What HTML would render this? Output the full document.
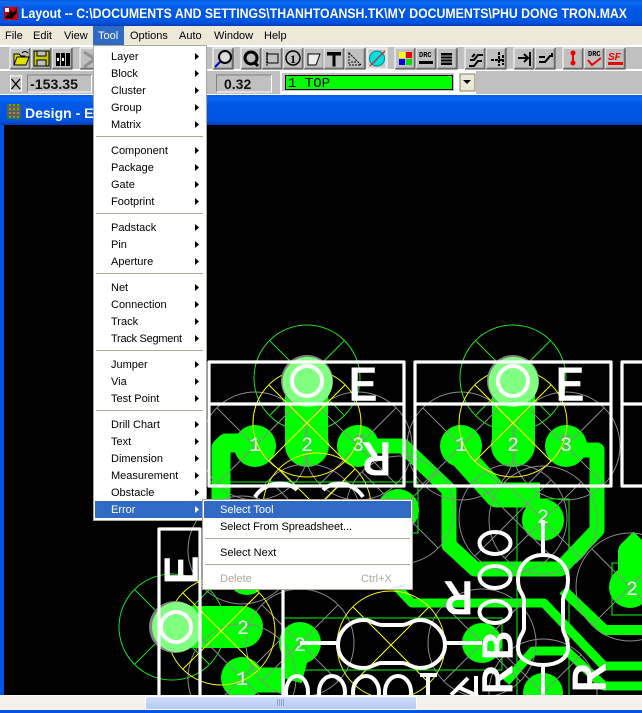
<!DOCTYPE html>
<html><head><meta charset="utf-8"><style>
html,body{margin:0;padding:0;background:#000;width:642px;height:713px;overflow:hidden}
svg{display:block}
.m{font:11px "Liberation Sans",sans-serif;fill:#000}
.ct{font:48px "Liberation Mono",monospace;fill:#fff;stroke:#fff;stroke-width:1.6}
.n{font:20px "Liberation Mono",monospace;fill:#e8ffe8}
</style></head><body>
<svg width="642" height="713" viewBox="0 0 642 713" xmlns="http://www.w3.org/2000/svg">
<defs>
<linearGradient id="tb" x1="0" y1="0" x2="0" y2="1"><stop offset="0" stop-color="#0a5ae0"/><stop offset=".12" stop-color="#0a6af5"/><stop offset=".3" stop-color="#0058e6"/><stop offset=".85" stop-color="#0055e0"/><stop offset="1" stop-color="#003cb8"/></linearGradient>
<linearGradient id="th" x1="0" y1="0" x2="0" y2="1"><stop offset="0" stop-color="#d3e0fc"/><stop offset="1" stop-color="#b4c8f6"/></linearGradient>
<g id="btn"><rect width="20" height="21" fill="#c0c0c0"/><path d="M0 21V0H20" fill="none" stroke="#fff"/><path d="M20 0V21H0" fill="none" stroke="#444"/><path d="M19 1V20H1" fill="none" stroke="#909090"/></g>
<g id="th1" fill="none" stroke="#8c8c8c"><circle r="54"/><path d="M-38-38L38 38M-38 38L38-38"/></g>
<g id="grn" fill="none" stroke="#1ee01e"><circle r="53"/><path d="M-37-37L37 37M-37 37L37-37"/></g>
<g id="yel" fill="none" stroke="#ffff00"><circle r="54"/><path d="M-38-38L38 38M-38 38L38-38"/></g>
</defs>

<rect width="642" height="713" fill="#0055e3"/>
<rect width="642" height="26" fill="url(#tb)"/>
<rect x="4" y="7" width="14" height="13" fill="#c00"/><path d="M5 18L11 10L13 13L17 8V12L12 19Z" fill="#000"/><rect x="5" y="8" width="4" height="4" fill="#fff"/>
<text x="21" y="18" font-family="Liberation Sans,sans-serif" font-weight="bold" font-size="14" fill="#fff" textLength="606" lengthAdjust="spacingAndGlyphs">Layout -- C:\DOCUMENTS AND SETTINGS\THANHTOANSH.TK\MY DOCUMENTS\PHU DONG TRON.MAX</text>

<rect y="26" width="642" height="19" fill="#ece9d8"/>
<rect x="93" y="26" width="31" height="19" fill="#316ac5"/>
<g class="m"><text x="5" y="39" class="m">File</text><text x="33" y="39" class="m">Edit</text><text x="64" y="39" class="m">View</text><text x="98" y="39" class="m" style="fill:#fff">Tool</text><text x="130" y="39" class="m">Options</text><text x="179" y="39" class="m">Auto</text><text x="214" y="39" class="m">Window</text><text x="264" y="39" class="m">Help</text></g>

<rect y="45" width="642" height="2" fill="#fff"/>
<rect y="47" width="642" height="23" fill="#c0c0c0"/>
<rect y="69" width="642" height="2" fill="#fff"/>
<rect y="71" width="642" height="23" fill="#c0c0c0"/>
<rect y="94" width="642" height="1" fill="#fff"/>

<g>
<use href="#btn" x="10" y="48"/><use href="#btn" x="31" y="48"/><use href="#btn" x="52" y="48"/><use href="#btn" x="80" y="48"/>
<use href="#btn" x="213" y="48"/><use href="#btn" x="241" y="48"/><use href="#btn" x="262" y="48"/><use href="#btn" x="283" y="48"/><use href="#btn" x="304" y="48"/><use href="#btn" x="324" y="48"/><use href="#btn" x="345" y="48"/><use href="#btn" x="395" y="48"/><use href="#btn" x="416" y="48"/><use href="#btn" x="437" y="48"/><use href="#btn" x="465" y="48"/><use href="#btn" x="486" y="48"/><use href="#btn" x="514" y="48"/><use href="#btn" x="535" y="48"/><use href="#btn" x="563" y="48"/><use href="#btn" x="584" y="48"/><use href="#btn" x="605" y="48"/>
<rect x="367" y="48" width="20" height="21" fill="#d8d8d8" stroke="#fff"/>
<path d="M14 65L17 57H29L26 65ZM14 65V54H19L21 56H25V57" fill="#e0e000" stroke="#000"/><path d="M22 53Q25 50 28 53" fill="none" stroke="#000"/>
<rect x="34" y="51" width="15" height="15" fill="#c8c800" stroke="#000"/><rect x="37" y="51" width="9" height="5" fill="#c0c0c0" stroke="#000"/><rect x="37" y="60" width="9" height="6" fill="#c0c0c0" stroke="#000"/>
<path d="M56 53h4v13h-4zM61 53h4v13h-4zM66 53h4v13h-4z" fill="#000"/><rect x="57" y="58" width="2" height="3" fill="#fff"/><rect x="62" y="58" width="2" height="3" fill="#fff"/>
<path d="M84 52L95 59L84 67" fill="none" stroke="#909090" stroke-width="3"/>
<circle cx="225" cy="57" r="6" fill="#ddd" stroke="#000" stroke-width="2"/><path d="M220 62L215 67" stroke="#00c" stroke-width="2"/>
<circle cx="251" cy="58" r="6" fill="none" stroke="#000" stroke-width="3"/><path d="M254 62L258 66" stroke="#000" stroke-width="3"/>
<rect x="267" y="54" width="11" height="9" fill="none" stroke="#000"/><path d="M266 53h13M266 56h13M266 59h13M266 62h13M266 65h13" stroke="#000" fill="none" stroke-dasharray="2 11"/>
<circle cx="293" cy="58" r="7" fill="none" stroke="#000" stroke-width="1.5"/><text x="290" y="63" font-family="Liberation Serif,serif" font-size="12" font-weight="bold" fill="#000">1</text>
<path d="M308 54H320L316 65H308Z" fill="#eee" stroke="#000"/>
<path d="M327 52h14v3.500h-5.500v11h-3v-11h-5.500z" fill="#000"/>
<path d="M349 53V65H361ZM351 62L357 62" fill="none" stroke="#000" stroke-dasharray="2 1"/>
<rect x="369" y="50" width="16" height="17" fill="#c8c8c8"/><circle cx="377" cy="58.500" r="7.500" fill="#00e0e0" stroke="#088" /><path d="M370 66L385 51" stroke="#e00" stroke-width="1"/>
<rect x="399" y="52" width="6" height="6" fill="#ff0"/><rect x="406" y="52" width="6" height="6" fill="#e00"/><rect x="399" y="59" width="6" height="6" fill="#00d"/><rect x="406" y="59" width="6" height="6" fill="#0d0"/>
<text x="419" y="57" font-family="Liberation Mono,monospace" font-weight="bold" font-size="7" fill="#000">DRC</text><rect x="419" y="61" width="14" height="3" fill="#000"/>
<path d="M441 53h11v12h-11z" fill="#000"/><path d="M441 56h11M441 59h11M441 62h11" stroke="#c0c0c0"/>
<path d="M469 66h5l4-5h4M470 60h4l4-5h5M475 54l-3 3" fill="none" stroke="#000" stroke-width="2"/>
<path d="M499 52v14M491 60h12M503 55v10" fill="none" stroke="#000" stroke-width="2" stroke-dasharray="3 1"/>
<path d="M518 58h10M524 54l4 4-4 4M530 52v14" fill="none" stroke="#000" stroke-width="2"/>
<path d="M539 62h6l5-6h3M539 57h6M552 53v4" fill="none" stroke="#000" stroke-width="2"/>
<circle cx="573" cy="53" r="2.500" fill="#e00"/><circle cx="573" cy="63" r="2.500" fill="#e00"/><rect x="572" y="53" width="2" height="10" fill="#e00"/>
<text x="588" y="56" font-family="Liberation Mono,monospace" font-weight="bold" font-size="7" fill="#000">DRC</text><path d="M588 60l4 5 9-7" fill="none" stroke="#e00" stroke-width="2"/>
<text x="608" y="60" font-family="Liberation Sans,sans-serif" font-style="italic" font-weight="bold" font-size="10" fill="#e00">SF</text><rect x="608" y="62" width="15" height="3" fill="#e00"/>
</g>

<rect x="10.500" y="76" width="11" height="15" fill="#c0c0c0" stroke="#fff"/>
<path d="M11.500 79L20 89M20 79L11.500 89" stroke="#000" stroke-width="1.300"/>
<rect x="27.500" y="75" width="64" height="17" fill="#c0c0c0" stroke="#808080"/>
<path d="M27.500 92H91.500V75" fill="none" stroke="#fff"/>
<text x="30" y="89" font-family="Liberation Sans,sans-serif" font-weight="bold" font-size="14" fill="#111" textLength="48" lengthAdjust="spacingAndGlyphs">-153.35</text>
<rect x="216.500" y="75" width="55" height="17" fill="#c0c0c0" stroke="#808080"/>
<path d="M216.500 92H271.500V75" fill="none" stroke="#fff"/>
<text x="224" y="89" font-family="Liberation Sans,sans-serif" font-weight="bold" font-size="14" fill="#111">0.32</text>
<rect x="280" y="71" width="196" height="23" fill="#fff"/>
<rect x="282" y="73" width="172" height="18" fill="#c0c0c0"/>
<rect x="285.500" y="75.500" width="167" height="14" fill="#00ff00" stroke="#000"/>
<text x="288" y="87" font-family="Liberation Mono,monospace" font-size="14" fill="#000" textLength="42">1 TOP</text>
<rect x="460" y="74" width="15" height="17" fill="#ece9d8" stroke="#808060"/>
<path d="M463 80h8l-4 4z" fill="#000"/>

<!-- MDI title -->
<rect y="95" width="642" height="30" fill="url(#tb)"/>
<rect x="7" y="104" width="14" height="15" fill="#208020"/><path d="M7 107h14M7 110h14M7 113h14M7 116h14" stroke="#d020d0"/><path d="M10 104v15M14 104v15M18 104v15" stroke="#e0c000" stroke-dasharray="2 2"/>
<text x="25" y="118" font-family="Liberation Sans,sans-serif" font-weight="bold" font-size="14" fill="#fff">Design - Er</text>

<!-- Canvas -->
<rect x="4" y="125" width="638" height="572" fill="#000"/>
<svg x="4" y="125" width="638" height="570" viewBox="4 125 638 570">
<g fill="none" stroke="#00ff00" stroke-linejoin="round">
<path d="M255 443H226L221 448V500" stroke-width="19"/>
<path d="M358 446H403L449 490V545L475 569H560L597 530V450H570" stroke-width="15"/>
<path d="M461 446V455L497 495H540" stroke-width="25"/>
<path d="M395 585L412 603H544L604 666H642" stroke-width="9"/>
<path d="M563 590L605 630H642" stroke-width="10"/>
<path d="M506 682L533 651H567L604 686H642" stroke-width="9"/>
<path d="M630 590V552L642 540" stroke-width="24"/>
<path d="M242 680H285" stroke-width="25"/>
<path d="M300 643L290 680" stroke-width="24"/>
</g>
<g fill="#00ff00">
<circle cx="255" cy="446" r="21"/><circle cx="358" cy="446" r="21"/><circle cx="461" cy="446" r="21"/><circle cx="566" cy="446" r="21"/>
<rect x="285" y="381" width="43" height="64"/><circle cx="307" cy="445" r="22"/>
<rect x="492" y="381" width="43" height="64"/><circle cx="513" cy="445" r="22"/>
<rect x="176" y="606" width="66" height="42"/><circle cx="242" cy="627" r="21"/>
<circle cx="242" cy="678" r="21"/><circle cx="300" cy="643" r="21"/>
<circle cx="543" cy="520" r="21"/><circle cx="482" cy="643" r="20"/><circle cx="630" cy="587" r="21"/><circle cx="543" cy="693" r="20"/><circle cx="398" cy="510" r="21"/><circle cx="247" cy="575" r="20"/>
</g>

<use href="#th1" x="255" y="446"/><use href="#th1" x="358" y="446"/><use href="#th1" x="461" y="446"/><use href="#th1" x="566" y="446"/><use href="#th1" x="307" y="518"/><use href="#th1" x="513" y="518"/><use href="#th1" x="400" y="510"/><use href="#th1" x="300" y="643"/><use href="#th1" x="242" y="678"/><use href="#th1" x="630" y="587"/><use href="#th1" x="482" y="643"/><use href="#th1" x="543" y="520"/><use href="#th1" x="543" y="693"/><use href="#th1" x="242" y="550"/>
<use href="#grn" x="307" y="378"/><use href="#grn" x="513" y="378"/><use href="#grn" x="172" y="627"/>
<use href="#yel" x="307" y="423"/><use href="#yel" x="513" y="423"/><use href="#yel" x="221" y="631"/><use href="#yel" x="391" y="645"/><use href="#yel" x="317" y="507"/>
<path d="M283 618H502V670H283M210 482H418V533H400M517 499H569V695M517 499V695" stroke="#00ff00" fill="none"/>
<rect x="612" y="563" width="40" height="52" fill="none" stroke="#00ff00"/>

<circle cx="307" cy="381" r="26" fill="#808080"/><circle cx="513" cy="381" r="26" fill="#808080"/><circle cx="175" cy="627" r="26" fill="#808080"/>
<circle cx="307.500" cy="382" r="25" fill="#80ff80"/><circle cx="513.500" cy="382" r="25" fill="#80ff80"/><circle cx="177" cy="627" r="25" fill="#80ff80"/>

<g fill="none" stroke="#fff" stroke-width="3.200" stroke-linejoin="round">
<rect x="209" y="362" width="195" height="124"/><path d="M209 404H404"/>
<rect x="415" y="362" width="196" height="124"/><path d="M415 404H611"/>
<path d="M642 362H622V486H642M622 404H642"/>
<path d="M200 695V529H159V695M283 695V590"/>
</g>
<g fill="none" stroke="#fff" stroke-width="4" stroke-linejoin="round">
<circle cx="307" cy="381" r="15"/><circle cx="513" cy="381" r="15"/><circle cx="176" cy="627" r="15"/>
<path d="M364 620C349 620 338 632 338 645C338 658 349 668 364 668C372 668 375 663 382 663H402C408 663 412 668 420 668C433 668 445 658 445 645C445 632 433 620 420 620C412 620 408 625 402 625H382C375 625 372 620 364 620Z"/>
<path d="M543 555C528 555 518 566 518 580C518 592 524 594 524 600V628C524 634 518 636 518 648C518 658 528 665 543 665C558 665 568 658 568 648C568 636 563 634 563 628V600C563 594 568 592 568 580C568 566 558 555 543 555Z"/>
<path d="M300 643H338M445 643H482M543 520V555M543 665V695M255 497C262 484 285 478 297 490M323 490C335 478 355 484 363 497"/>
<ellipse cx="495" cy="543" rx="15.500" ry="11"/><ellipse cx="495" cy="577" rx="15.500" ry="11"/><ellipse cx="495" cy="612" rx="15.500" ry="11"/>
<ellipse cx="297" cy="692" rx="11" ry="16"/><ellipse cx="332" cy="692" rx="13" ry="16"/><ellipse cx="366" cy="692" rx="13" ry="16"/><ellipse cx="398" cy="692" rx="13" ry="16"/>
<path d="M420 675H437M428 675V695M451 695L468 678M460 688L478 696M476 676V695"/>
</g>
<g class="ct" text-anchor="middle">
<text transform="translate(363 400)">E</text>
<text transform="translate(570 400)">E</text>
<text transform="translate(197 570) rotate(-90)">E</text>
<text transform="translate(377 443) rotate(180)">R</text>
<text transform="translate(459 582) rotate(180)">R</text>
<text transform="translate(512 646) rotate(-90) scale(1 .9)">B</text>
<text transform="translate(512 680) rotate(-90) scale(1 .9)">R</text>
<text transform="translate(605 678) rotate(-90)">R</text>
</g>
<path d="M355 436H364" stroke="#ff30ff"/><path d="M561 436H570" stroke="#ff30ff"/>
<g class="n" text-anchor="middle">
<text x="255" y="451">1</text><text x="307" y="451">2</text><text x="358" y="451">3</text><text x="461" y="451">1</text><text x="513" y="451">2</text><text x="566" y="451">3</text>
<text x="243" y="634">2</text><text x="242" y="685">1</text><text x="300" y="651">2</text><text x="543" y="523">2</text><text x="632" y="595">2</text>
</g>
</svg>

<!-- Scrollbar -->
<rect x="0" y="695" width="642" height="15" fill="#f4f2ea"/>
<rect x="0" y="695" width="642" height="1" fill="#fff"/>
<rect x="145.500" y="696.500" width="271" height="13" rx="2" fill="url(#th)" stroke="#fff"/>
<path d="M277.500 699v7M279.500 699v7M281.500 699v7M283.500 699v7" stroke="#8aa4dc"/>
<rect y="710" width="642" height="3" fill="#0055e3"/>
<rect x="0" y="125" width="4" height="570" fill="#0055e3"/>

<!-- Tool menu -->
<rect x="93.500" y="45.500" width="113" height="475" fill="#fff" stroke="#aca899"/>
<rect x="95" y="501" width="110" height="17" fill="#316ac5"/>
<g class="m">
<text x="111" y="60" class="m">Layer</text><text x="111" y="77" class="m">Block</text><text x="111" y="94" class="m">Cluster</text><text x="111" y="111" class="m">Group</text><text x="111" y="128" class="m">Matrix</text>
<text x="111" y="154" class="m">Component</text><text x="111" y="171" class="m">Package</text><text x="111" y="188" class="m">Gate</text><text x="111" y="205" class="m">Footprint</text>
<text x="111" y="231" class="m">Padstack</text><text x="111" y="248" class="m">Pin</text><text x="111" y="265" class="m">Aperture</text>
<text x="111" y="291" class="m">Net</text><text x="111" y="308" class="m">Connection</text><text x="111" y="325" class="m">Track</text><text x="111" y="342" class="m" textLength="71">Track Segment</text>
<text x="111" y="368" class="m">Jumper</text><text x="111" y="385" class="m">Via</text><text x="111" y="402" class="m">Test Point</text>
<text x="111" y="428" class="m">Drill Chart</text><text x="111" y="445" class="m">Text</text><text x="111" y="462" class="m">Dimension</text><text x="111" y="479" class="m">Measurement</text><text x="111" y="496" class="m">Obstacle</text><text x="111" y="513" class="m" style="fill:#fff">Error</text>
</g>
<path d="M96 136.500H203M96 213.500H203M96 273.500H203M96 350.500H203M96 410.500H203" stroke="#aca899"/>
<path fill="#000" d="M195 53l4 3.500-4 3.500zM195 70l4 3.500-4 3.500zM195 87l4 3.500-4 3.500zM195 104l4 3.500-4 3.500zM195 121l4 3.500-4 3.500zM195 147l4 3.500-4 3.500zM195 164l4 3.500-4 3.500zM195 181l4 3.500-4 3.500zM195 198l4 3.500-4 3.500zM195 224l4 3.500-4 3.500zM195 241l4 3.500-4 3.500zM195 258l4 3.500-4 3.500zM195 284l4 3.500-4 3.500zM195 301l4 3.500-4 3.500zM195 318l4 3.500-4 3.500zM195 335l4 3.500-4 3.500zM195 361l4 3.500-4 3.500zM195 378l4 3.500-4 3.500zM195 395l4 3.500-4 3.500zM195 421l4 3.500-4 3.500zM195 438l4 3.500-4 3.500zM195 455l4 3.500-4 3.500zM195 472l4 3.500-4 3.500zM195 489l4 3.500-4 3.500z"/>
<path fill="#fff" d="M195 506l4 3.500-4 3.500z"/>

<!-- Error submenu -->
<rect x="202.500" y="499.500" width="210" height="90" fill="#fff" stroke="#aca899"/>
<rect x="204" y="501" width="207" height="17" fill="#316ac5"/>
<text x="220" y="513" class="m" style="fill:#fff">Select Tool</text>
<text x="220" y="530" class="m" textLength="132">Select From Spreadsheet...</text>
<text x="220" y="556" class="m">Select Next</text>
<text x="220" y="582" class="m" style="fill:#aca899">Delete</text>
<text x="361" y="582" class="m" style="fill:#aca899">Ctrl+X</text>
<path d="M205 538.500H410M205 564.500H410" stroke="#aca899"/>
</svg>
</body></html>
